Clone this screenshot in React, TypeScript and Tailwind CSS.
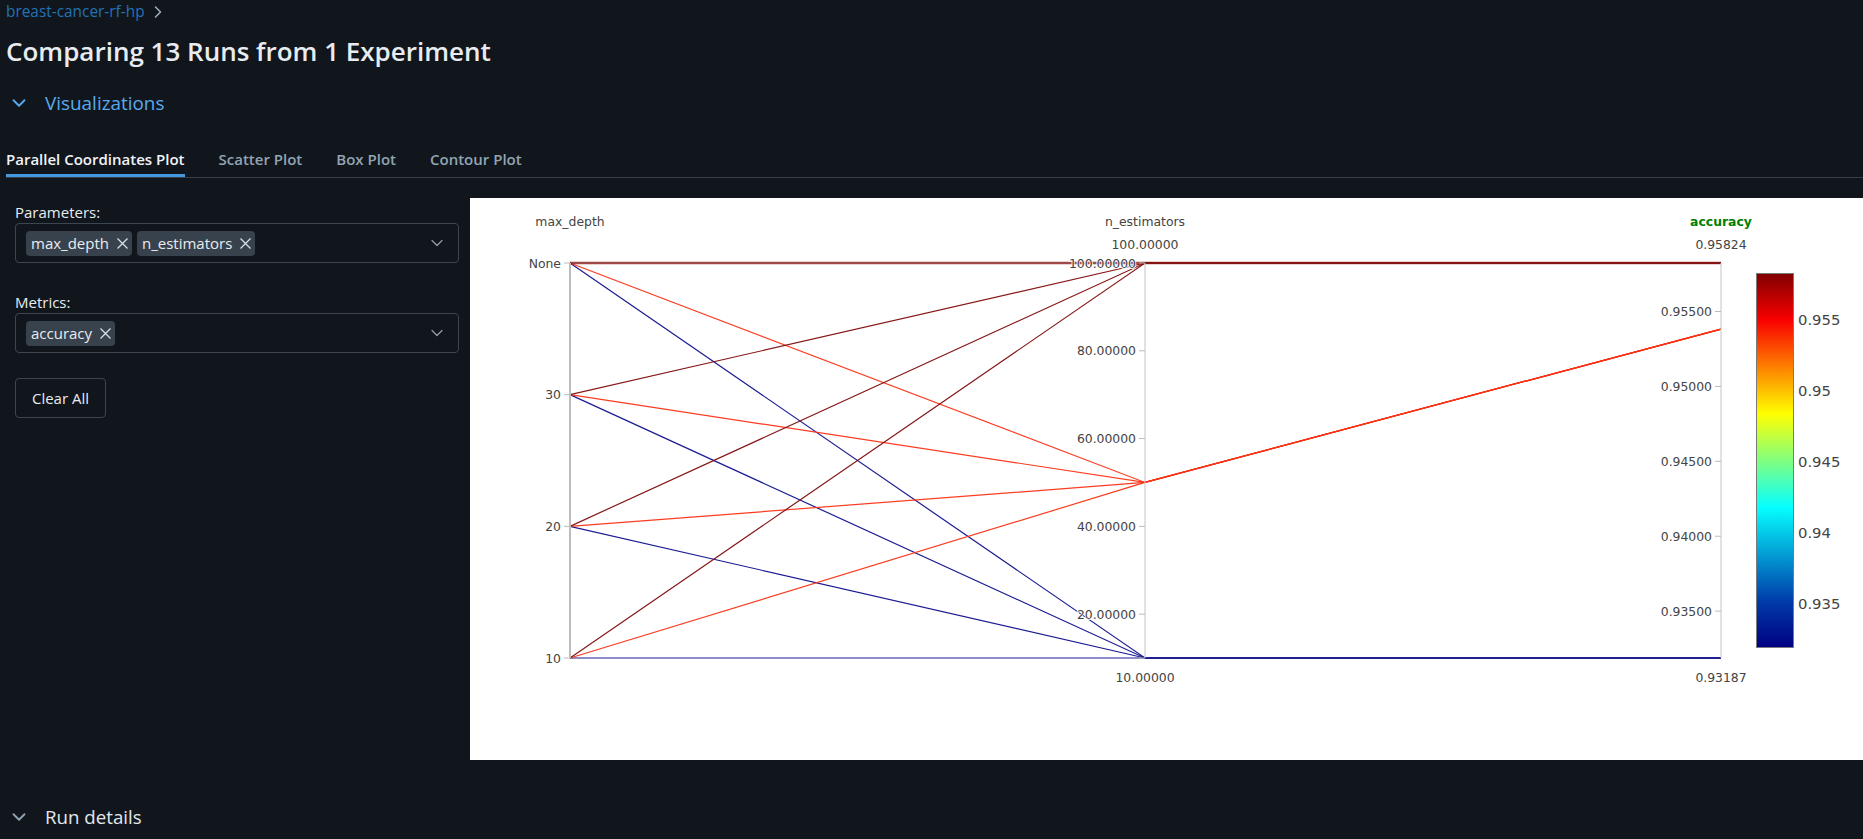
import { ChevronDown, ChevronRight } from "lucide-react";

const X1 = 570;
const X2 = 1145;
const X3 = 1721;
const TOP = 263;
const BOT = 658;

const depthY = (i: number) => TOP + (i * (BOT - TOP)) / 3;
const estY = (v: number) => TOP + ((100 - v) / 90) * (BOT - TOP);
const accY = (v: number) => TOP + ((0.95824 - v) / 0.02637) * (BOT - TOP);

const DARK = "rgb(128,12,12)";
const ORANGE = "rgb(251,50,20)";
const BLUE = "rgb(16,16,140)";

// max_depth index: 0 = None, 1 = 30, 2 = 20, 3 = 10
const runs = [
  { d: 0, e: 10, a: 0.93187, c: BLUE },
  { d: 1, e: 10, a: 0.93187, c: BLUE },
  { d: 2, e: 10, a: 0.93187, c: BLUE },
  { d: 3, e: 10, a: 0.93187, c: BLUE },
  { d: 0, e: 50, a: 0.95383, c: ORANGE },
  { d: 1, e: 50, a: 0.95383, c: ORANGE },
  { d: 2, e: 50, a: 0.95383, c: ORANGE },
  { d: 3, e: 50, a: 0.95383, c: ORANGE },
  { d: 1, e: 100, a: 0.95824, c: DARK },
  { d: 2, e: 100, a: 0.95824, c: DARK },
  { d: 3, e: 100, a: 0.95824, c: DARK },
  { d: 0, e: 100, a: 0.95824, c: DARK },
];

const CHART_FONT = "'DejaVu Sans', Verdana, sans-serif";

function Tick({ x, y, label }: { x: number; y: number; label: string }) {
  return (
    <g>
      <line x1={x - 6} y1={y} x2={x} y2={y} stroke="#bbb" strokeWidth={1} />
      <text
        x={x - 9}
        y={y}
        textAnchor="end"
        dominantBaseline="central"
        fontSize={12.4}
        fill="#444"
        stroke="#fff"
        strokeWidth={2}
        strokeOpacity={0.85}
        paintOrder="stroke"
        fontFamily={CHART_FONT}
      >
        {label}
      </text>
    </g>
  );
}

function AxisText({
  x,
  y,
  label,
  bold,
  color = "#444",
}: {
  x: number;
  y: number;
  label: string;
  bold?: boolean;
  color?: string;
}) {
  return (
    <text
      x={x}
      y={y}
      textAnchor="middle"
      dominantBaseline="central"
      fontSize={12.4}
      fontWeight={bold ? 700 : 400}
      fill={color}
      fontFamily={CHART_FONT}
    >
      {label}
    </text>
  );
}

function ParallelChart() {
  return (
    <svg width="1393" height="562" viewBox="470 198 1393 562" className="block">
      <defs>
        <linearGradient id="jet" x1="0" y1="1" x2="0" y2="0">
          <stop offset="0" stopColor="rgb(0,0,131)" />
          <stop offset="0.125" stopColor="rgb(0,60,170)" />
          <stop offset="0.375" stopColor="rgb(5,255,255)" />
          <stop offset="0.625" stopColor="rgb(255,255,0)" />
          <stop offset="0.875" stopColor="rgb(250,0,0)" />
          <stop offset="1" stopColor="rgb(128,0,0)" />
        </linearGradient>
      </defs>

      {runs.map((r, i) => (
        <polyline
          key={i}
          points={`${X1},${depthY(r.d)} ${X2},${estY(r.e)} ${X3},${accY(r.a)}`}
          fill="none"
          stroke={r.c}
          strokeWidth={r.d === 0 && r.e === 100 ? 2.4 : 1.2}
          strokeOpacity={r.d === 0 && r.e === 100 ? 0.75 : 0.95}
        />
      ))}

      {/* axes */}
      <line x1={X1} y1={TOP} x2={X1} y2={BOT} stroke="#bdbdbd" strokeWidth={2} />
      <line x1={X2} y1={TOP} x2={X2} y2={BOT} stroke="#c4c4c4" strokeWidth={1} />
      <line x1={X3} y1={TOP} x2={X3} y2={BOT} stroke="#c4c4c4" strokeWidth={1} />

      {["None", "30", "20", "10"].map((l, i) => (
        <Tick key={l} x={X1} y={depthY(i)} label={l} />
      ))}
      {[100, 80, 60, 40, 20].map((v) => (
        <Tick key={v} x={X2} y={estY(v)} label={v.toFixed(5)} />
      ))}
      <line x1={X2 - 6} y1={BOT} x2={X2} y2={BOT} stroke="#bbb" />
      {[0.955, 0.95, 0.945, 0.94, 0.935].map((v) => (
        <Tick key={v} x={X3} y={accY(v)} label={v.toFixed(5)} />
      ))}

      <AxisText x={X1} y={221} label="max_depth" />
      <AxisText x={X2} y={221} label="n_estimators" />
      <AxisText x={X3} y={221} label="accuracy" bold color="#008000" />
      <AxisText x={X2} y={244} label="100.00000" />
      <AxisText x={X3} y={244} label="0.95824" />
      <AxisText x={X2} y={677} label="10.00000" />
      <AxisText x={X3} y={677} label="0.93187" />

      {/* colorbar */}
      <rect x={1756.5} y={273.5} width={37} height={374} fill="url(#jet)" stroke="#7a7a7a" strokeWidth={1} />
      {[
        ["0.955", 319],
        ["0.95", 390],
        ["0.945", 461],
        ["0.94", 532],
        ["0.935", 603],
      ].map(([l, y]) => (
        <text
          key={l}
          x={1798}
          y={y}
          dominantBaseline="central"
          fontSize={14.8}
          fill="#444"
          fontFamily={CHART_FONT}
        >
          {l}
        </text>
      ))}
    </svg>
  );
}

function Chip({ label }: { label: string }) {
  return (
    <div className="flex h-[25px] items-center gap-[8px] rounded-[4px] bg-[#38424d] pl-[5px] pr-[4px] text-[15px] leading-none text-[#e8ecf0]">
      <span>{label}</span>
      <svg width="11" height="11" viewBox="0 0 11 11">
        <path d="M0.5 0.5 L10.5 10.5 M10.5 0.5 L0.5 10.5" stroke="#d8dee5" strokeWidth="1.3" />
      </svg>
    </div>
  );
}

function MultiSelect({ items }: { items: string[] }) {
  return (
    <div className="mt-[1px] flex h-[40px] items-center rounded-[4px] border border-[#3c4651] pl-[10px] pr-[11px]">
      <div className="flex flex-1 items-center gap-[5px]">
        {items.map((i) => (
          <Chip key={i} label={i} />
        ))}
      </div>
      <ChevronDown size={20} strokeWidth={1.5} className="text-[#8f9aa6]" />
    </div>
  );
}

export default function App() {
  return (
    <div className="h-[839px] overflow-hidden bg-[#11161d] pl-[6px] font-['Open_Sans',sans-serif] text-[#e8ecf0]">
      <div className="flex h-[24px] items-center gap-[3px] text-[15.4px] text-[#2272b4]">
        <span>breast-cancer-rf-hp</span>
        <ChevronRight size={20} strokeWidth={1.8} className="text-[#a3afbb]" />
      </div>

      <div className="flex h-[54px] items-center text-[26px] font-semibold leading-none">
        Comparing 13 Runs from 1 Experiment
      </div>

      <div className="flex h-[50px] items-center">
        <ChevronDown size={22} strokeWidth={2} className="ml-[2px] text-[#5aa9ec]" />
        <span className="ml-[15px] text-[18.9px] text-[#5aa9ec]">Visualizations</span>
      </div>

      <div className="flex h-[50px] items-end gap-[34px] border-b border-[#343d48] text-[15px] font-semibold leading-[20px]">
        <div className="border-b-[3px] border-[#4299e0] pb-[5px] text-[#f1f4f7]">Parallel Coordinates Plot</div>
        <div className="border-b-[3px] border-transparent pb-[5px] text-[#92a4b3]">Scatter Plot</div>
        <div className="border-b-[3px] border-transparent pb-[5px] text-[#92a4b3]">Box Plot</div>
        <div className="border-b-[3px] border-transparent pb-[5px] text-[#92a4b3]">Contour Plot</div>
      </div>

      <div className="flex">
        <div className="w-[464px] pl-[9px] pr-[11px] pt-[24px] text-[15px] leading-[20px]">
          <div>Parameters:</div>
          <MultiSelect items={["max_depth", "n_estimators"]} />
          <div className="mt-[29px]">Metrics:</div>
          <MultiSelect items={["accuracy"]} />
          <button className="mt-[25px] flex h-[40px] w-[91px] items-center justify-center rounded-[4px] border border-[#3c4651] text-[15px] text-[#e8ecf0]">
            Clear All
          </button>
        </div>
        <div className="mt-[20px] h-[562px] flex-1 overflow-hidden bg-white">
          <ParallelChart />
        </div>
      </div>

      <div className="mt-[37px] flex h-[40px] items-center">
        <ChevronDown size={22} strokeWidth={2} className="ml-[2px] text-[#92a4b3]" />
        <span className="ml-[15px] text-[18.7px] text-[#e2e7ec]">Run details</span>
      </div>
    </div>
  );
}
